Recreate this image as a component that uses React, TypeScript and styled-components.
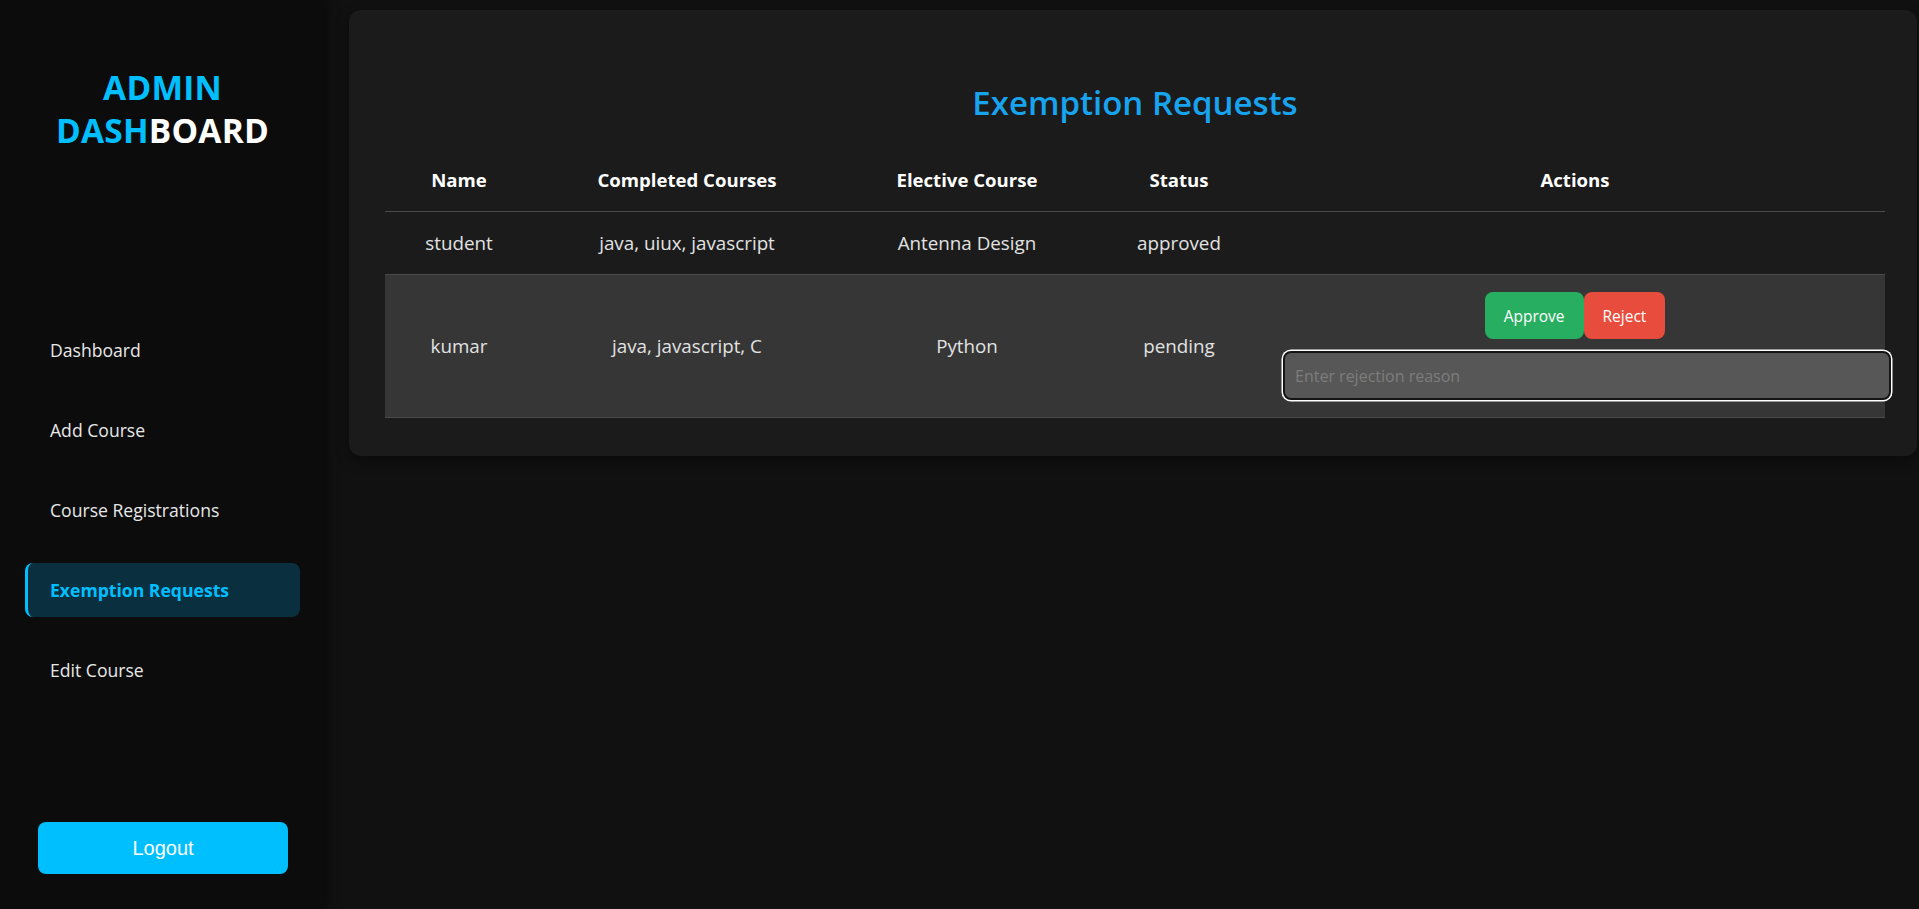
import React from "react";
import styled, { createGlobalStyle } from "styled-components";

const FONT = `"Open Sans", "Noto Sans", sans-serif`;

const Global = createGlobalStyle`
  * { box-sizing: border-box; }
  html, body { margin: 0; padding: 0; background: #111111; }
  body { font-family: ${FONT}; color: #e0e0e0; }
`;

const Layout = styled.div`
  display: flex;
  min-height: 100vh;
  background: #111111;
`;

const Sidebar = styled.aside`
  width: 325px;
  flex-shrink: 0;
  height: 100vh;
  background: #0c0c0c;
  box-shadow: 2px 0 10px rgba(0, 0, 0, 0.5);
  display: flex;
  flex-direction: column;
  padding: 66px 25px 35px 25px;
`;

const Brand = styled.h1`
  margin: 0;
  text-align: center;
  font-size: 33.5px;
  line-height: 43px;
  font-weight: 700;
  color: #00bfff;
  letter-spacing: 0.2px;
`;

const White = styled.span`
  color: #ffffff;
`;

const Nav = styled.nav`
  display: flex;
  flex-direction: column;
  gap: 26px;
  margin-top: 171px;
`;

const NavItem = styled.a<{ $active?: boolean }>`
  display: block;
  height: 54px;
  line-height: 54px;
  border-radius: 8px;
  font-size: 17.6px;
  text-decoration: none;
  color: ${(p) => (p.$active ? "#00bfff" : "#e8e8e8")};
  font-weight: ${(p) => (p.$active ? 700 : 400)};
  background: ${(p) => (p.$active ? "#0a2f3e" : "transparent")};
  border-left: 3px solid ${(p) => (p.$active ? "#00bfff" : "transparent")};
  padding-left: 22px;
`;

const LogoutButton = styled.button`
  margin-top: auto;
  margin-left: 13px;
  width: 250px;
  height: 52px;
  border: none;
  border-radius: 8px;
  background: #00bfff;
  color: #ffffff;
  font-family: "Liberation Sans", Arial, sans-serif;
  font-size: 20px;
`;

const Main = styled.main`
  flex: 1;
  padding: 10px 2px 0 24px;
`;

const Card = styled.section`
  background: #1b1b1b;
  border-radius: 12px;
  padding: 71px 32px 38px 36px;
  box-shadow: 0 4px 14px rgba(0, 0, 0, 0.45);
`;

const Title = styled.h2`
  margin: 0 0 24px 0;
  text-align: center;
  font-size: 33px;
  line-height: 43px;
  font-weight: 600;
  color: #18a3ef;
`;

const Table = styled.table`
  width: 1500px;
  table-layout: fixed;
  border-collapse: collapse;
`;

const Col = styled.col<{ $w: number }>`
  width: ${(p) => p.$w}px;
`;

const HeadCell = styled.th`
  padding: 17px 10px;
  line-height: 29px;
  font-size: 18.6px;
  font-weight: 700;
  color: #ffffff;
  text-align: center;
  border-bottom: 1px solid #4a4a4a;
`;

const Row = styled.tr<{ $shade?: boolean }>`
  background: ${(p) => (p.$shade ? "#363636" : "transparent")};
  border-bottom: 1px solid #4a4a4a;
`;

const Cell = styled.td`
  padding: 17px 18px;
  line-height: 28px;
  font-size: 18.8px;
  color: #e2e2e2;
  text-align: center;
  vertical-align: middle;
`;

const ButtonRow = styled.div`
  display: flex;
  justify-content: center;
`;

const ActionButton = styled.button<{ $kind: "approve" | "reject" }>`
  height: 47px;
  padding: 0 19px;
  border: none;
  border-radius: 8px;
  font-family: ${FONT};
  font-size: 15.5px;
  color: #ffffff;
  background: ${(p) => (p.$kind === "approve" ? "#27ae60" : "#e74c3c")};
`;

const ReasonInput = styled.input`
  display: block;
  box-sizing: content-box;
  width: 100%;
  height: 45px;
  margin-top: 12px;
  padding: 0 10px;
  border: 2px solid #151515;
  border-radius: 8px;
  box-shadow: 0 0 0 1.5px #ffffff;
  background: #575757;
  color: #ffffff;
  caret-color: #ffffff;
  font-family: ${FONT};
  font-size: 16px;
  outline: none;
  &::placeholder {
    color: #7d7d7d;
  }
`;

type Req = {
  name: string;
  completed: string;
  elective: string;
  status: string;
  pending?: boolean;
};

const requests: Req[] = [
  { name: "student", completed: "java, uiux, javascript", elective: "Antenna Design", status: "approved" },
  { name: "kumar", completed: "java, javascript, C", elective: "Python", status: "pending", pending: true },
];

const navItems = ["Dashboard", "Add Course", "Course Registrations", "Exemption Requests", "Edit Course"];

export default function App() {
  return (
    <>
      <Global />
      <Layout>
        <Sidebar>
          <Brand>
            ADMIN
            <br />
            DASH<White>BOARD</White>
          </Brand>
          <Nav>
            {navItems.map((n) => (
              <NavItem key={n} $active={n === "Exemption Requests"}>
                {n}
              </NavItem>
            ))}
          </Nav>
          <LogoutButton>Logout</LogoutButton>
        </Sidebar>
        <Main>
          <Card>
            <Title>Exemption Requests</Title>
            <Table>
              <colgroup>
                <Col $w={148} />
                <Col $w={308} />
                <Col $w={252} />
                <Col $w={172} />
                <Col $w={620} />
              </colgroup>
              <thead>
                <tr>
                  <HeadCell>Name</HeadCell>
                  <HeadCell>Completed Courses</HeadCell>
                  <HeadCell>Elective Course</HeadCell>
                  <HeadCell>Status</HeadCell>
                  <HeadCell>Actions</HeadCell>
                </tr>
              </thead>
              <tbody>
                {requests.map((r, i) => (
                  <Row key={r.name} $shade={i % 2 === 1}>
                    <Cell>{r.name}</Cell>
                    <Cell>{r.completed}</Cell>
                    <Cell>{r.elective}</Cell>
                    <Cell>{r.status}</Cell>
                    <Cell>
                      {r.pending && (
                        <>
                          <ButtonRow>
                            <ActionButton $kind="approve">Approve</ActionButton>
                            <ActionButton $kind="reject">Reject</ActionButton>
                          </ButtonRow>
                          <ReasonInput placeholder="Enter rejection reason" autoFocus />
                        </>
                      )}
                    </Cell>
                  </Row>
                ))}
              </tbody>
            </Table>
          </Card>
        </Main>
      </Layout>
    </>
  );
}
